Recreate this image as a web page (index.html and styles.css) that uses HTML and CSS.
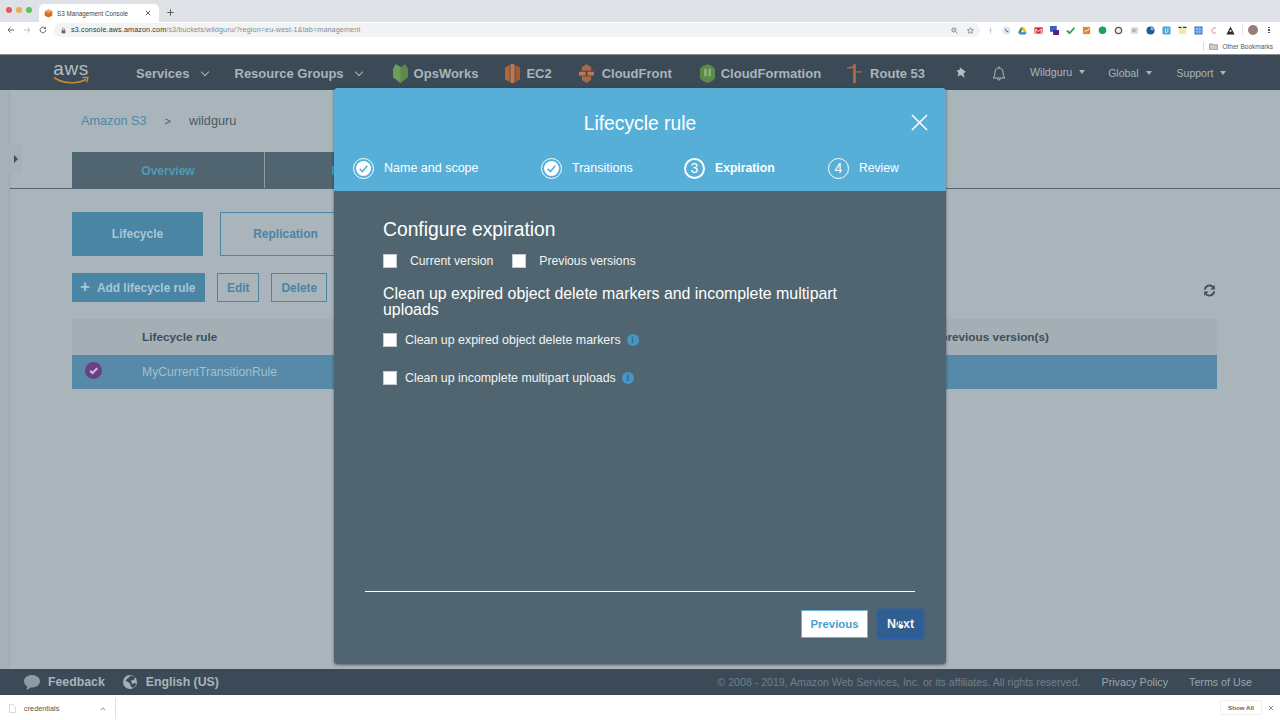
FILE: index.html
```html
<!DOCTYPE html>
<html lang="en">
<head>
<meta charset="utf-8">
<title>S3 Management Console</title>
<link rel="stylesheet" href="styles.css">
</head>
<body>
<div class="browser">
  <div class="tabstrip">
    <div class="lights"><span class="light red"></span><span class="light yellow"></span><span class="light green"></span></div>
    <div class="tab">
      <svg class="favicon" viewBox="0 0 10 10"><path d="M5 .5 9.2 2.6V7.4L5 9.5.8 7.4V2.6Z" fill="#dd6b20"/><path d="M5 .5 9.2 2.6 5 4.7.8 2.6Z" fill="#f0a05a"/></svg>
      <span class="tabtitle">S3 Management Console</span>
      <svg class="tabclose" viewBox="0 0 8 8"><path d="M1 1 7 7M7 1 1 7" stroke="#444" stroke-width="1.1"/></svg>
    </div>
    <svg class="newtab" viewBox="0 0 10 10"><path d="M5 .5V9.5M.5 5H9.5" stroke="#444" stroke-width="1.2"/></svg>
  </div>
  <div class="toolbar">
    <svg class="navicon" viewBox="0 0 10 10"><path d="M9 5H1.500M4.500 1.800 1.300 5l3.200 3.200" fill="none" stroke="#555" stroke-width="1.100"/></svg>
    <svg class="navicon" viewBox="0 0 10 10"><path d="M1 5H8.500M5.500 1.800 8.700 5 5.500 8.200" fill="none" stroke="#bbb" stroke-width="1.100"/></svg>
    <svg class="navicon" viewBox="0 0 10 10"><path d="M8.400 5A3.500 3.500 0 1 1 7.300 2.400" fill="none" stroke="#555" stroke-width="1.100"/><path d="M8.600 .8V3.600H5.800Z" fill="#555"/></svg>
    <div class="omnibox">
      <svg class="lock" viewBox="0 0 8 10"><path d="M1 4.500H7V9.500H1Z" fill="#666"/><path d="M2.300 4.500V3a1.700 1.700 0 0 1 3.400 0V4.500" fill="none" stroke="#666"/></svg>
      <span class="url"><span class="host">s3.console.aws.amazon.com</span>/s3/buckets/wildguru/?region=eu-west-1&amp;tab=management</span>
      <svg class="omni-icon" viewBox="0 0 10 10"><circle cx="4.200" cy="4.200" r="3" fill="none" stroke="#666"/><path d="M6.500 6.500 9.200 9.200M2.800 4.200H5.600" stroke="#666"/></svg>
      <svg class="omni-icon" viewBox="0 0 10 10"><path d="M5 .8 6.200 3.700 9.400 4 7 6 7.700 9.100 5 7.500 2.300 9.100 3 6 .6 4 3.800 3.700Z" fill="none" stroke="#555" stroke-width=".8"/></svg>
    </div>
    <div class="extensions">
      <svg class="ext" viewBox="0 0 10 10"><path d="M5 1.500V8.500M3.500 5H6.500" stroke="#c8cdd2" stroke-width="1.100"/></svg>
      <svg class="ext" viewBox="0 0 10 10"><circle cx="5" cy="5" r="4.500" fill="#dbe6f3"/><path d="M3.500 3C3.500 5.500 5 7 7.500 7L6.500 5.500 5 6 4.500 4.500 5 3.500Z" fill="#1f4e96"/></svg>
      <svg class="ext" viewBox="0 0 10 10"><path d="M3.500 1H6.500L9.800 7H6.500Z" fill="#f4c20d"/><path d="M3.500 1 .2 7 1.800 9.500 5 4Z" fill="#1c9a56"/><path d="M1.800 9.500H8.200L9.800 7H3.200Z" fill="#3b78e7"/></svg>
      <svg class="ext" viewBox="0 0 10 10"><path d="M.5 1.500H9.500V8.500H.5Z" fill="#c9303e"/><path d="M2 8.500V3.500L5 6 8 3.500V8.500" fill="none" stroke="#fff" stroke-width="1"/></svg>
      <svg class="ext" viewBox="0 0 10 10"><path d="M0 0H7.500V6.500H0Z" fill="#3a62c4"/><path d="M3.500 4.500H10V10H3.500Z" fill="#5a1f86"/></svg>
      <svg class="ext" viewBox="0 0 10 10"><path d="M1 5 4 8 9.300 2" fill="none" stroke="#3fa34d" stroke-width="2"/></svg>
      <svg class="ext" viewBox="0 0 10 10"><path d="M1 1H9V9H1Z" fill="#e5852e"/><path d="M2.500 7 5 4.500 6 5.500 8 2.500" fill="none" stroke="#fff" stroke-width="1"/></svg>
      <svg class="ext" viewBox="0 0 10 10"><circle cx="5" cy="4.800" r="4.200" fill="#1aa35c"/></svg>
      <svg class="ext" viewBox="0 0 10 10"><circle cx="5" cy="5" r="3.500" fill="#eee" stroke="#555" stroke-width="1.400"/></svg>
      <svg class="ext" viewBox="0 0 10 10"><rect x="1" y="1.500" width="8" height="7" rx="1.500" fill="#d8d8d8"/><rect x="3" y="3.500" width="3" height="3" fill="#aaa"/></svg>
      <svg class="ext" viewBox="0 0 10 10"><circle cx="5" cy="5" r="4.500" fill="#1e5e90"/><path d="M6 1 9 3 7 5 5 4Z" fill="#8cc4e8"/></svg>
      <svg class="ext" viewBox="0 0 10 10"><rect x=".5" y=".5" width="9" height="9" rx="1.500" fill="#4fa5dd"/><path d="M4 2.500V7.500L6.500 6.500V2.500" fill="none" stroke="#d4ebf8"/></svg>
      <svg class="ext" viewBox="0 0 10 10"><rect x="1" y="2" width="8" height="7" fill="#f3e6ae"/><path d="M.5 1.500H4M5.500 1.500H9.500" stroke="#333" stroke-width="1.200"/></svg>
      <svg class="ext" viewBox="0 0 10 10"><path d="M.5.5H9.500V9.500H.5Z" fill="#3a7fd0"/><path d="M3.500 1V9M6.500 1V9M1 3.500H9M1 6.500H9" stroke="#d6e6f7" stroke-width=".7"/></svg>
      <svg class="ext" viewBox="0 0 10 10"><path d="M7 2.500A3 3 0 1 0 7 7.500" fill="none" stroke="#eeb5b0" stroke-width="1.600"/></svg>
      <svg class="ext" viewBox="0 0 10 10"><path d="M5 .5 7 4.500 9.500 9.500H.5L3 4.500Z" fill="#2b2b2b"/><circle cx="5" cy="5.500" r="1.200" fill="#ddd"/></svg>
    </div>
    <span class="tb-sep"></span>
    <span class="avatar"></span>
    <span class="kebab"><i></i><i></i><i></i></span>
  </div>
  <div class="bookmarks">
    <span class="bm-sep"></span>
    <svg class="folder" viewBox="0 0 10 8"><path d="M.5 1H4L5 2H9.500V7.500H.5Z" fill="#ccc" stroke="#777" stroke-width=".7"/></svg>
    <span>Other Bookmarks</span>
  </div>
</div>

<header class="topnav">
  <div class="aws">
    <span class="awstext">aws</span>
    <svg class="smile" viewBox="0 0 36 9"><path d="M1 1.500C9 7.500 24 8.500 33 3.500" fill="none" stroke="#c28a3e" stroke-width="1.600"/><path d="M29.500 1.500 35 1.500 33.500 6.500" fill="none" stroke="#c28a3e" stroke-width="1.300"/></svg>
  </div>
  <a class="menu services">Services<span class="caret"></span></a>
  <a class="menu groups">Resource Groups<span class="caret"></span></a>
  <a class="svc opsworks"><svg viewBox="0 0 16 20"><path d="M8 3 13 0 16 5V14L8 20 0 14V5L3 0Z" fill="#5d8a4a"/><path d="M8 3V20L0 14V5L3 0Z" fill="#6d9c56"/></svg>OpsWorks</a>
  <a class="svc ec2"><svg viewBox="0 0 16 20"><path d="M5 1 0 3.500V16.500L5 19Z" fill="#b4653a"/><path d="M5.800 0H10.200V20H5.800Z" fill="#c0794e"/><path d="M11 1 16 3.500V16.500L11 19Z" fill="#a55a33"/></svg>EC2</a>
  <a class="svc cloudfront"><svg viewBox="0 0 16 20"><path d="M3 3 8 0 13 3V7H3Z" fill="#a96a45"/><path d="M0 8H7V12H0ZM9 8H16V12H9Z" fill="#c0794e"/><path d="M3 13H13V17L8 20 3 17Z" fill="#a96a45"/></svg>CloudFront</a>
  <a class="svc cloudformation"><svg viewBox="0 0 16 20"><path d="M3 2 8 0 13 2 16 5V15L13 18 8 20 3 18 0 15V5Z" fill="#5d8a4a"/><path d="M4.500 5H7V13H4.500ZM9 5H11.500V13H9Z" fill="#8fb77b"/></svg>CloudFormation</a>
  <a class="svc route53"><svg viewBox="0 0 16 20"><path d="M0 3.500 6.500 2V0H9.500V7.500H16V9H9.500V20H6.500V4.500L0 5Z" fill="#a96a45"/></svg>Route 53</a>
  <svg class="pin" viewBox="0 0 12 12"><path d="M5 .5 11 5 8.500 6 9.500 11 6 8 2.500 9.500 3.500 6 1.500 3.500 4.500 3Z" fill="#b3bec4"/></svg>
  <svg class="bell" viewBox="0 0 14 15"><path d="M1 12C3 10.500 2.500 8.500 3 6 3.500 3 5 2 7 2S10.500 3 11 6C11.500 8.500 11 10.500 13 12Z" fill="none" stroke="#b3bec4" stroke-width="1"/><path d="M5.500 13a1.600 1.600 0 0 0 3 0M7 .5V2" fill="none" stroke="#b3bec4"/></svg>
  <a class="user wildguru">Wildguru<span class="caret small"></span></a>
  <a class="user global">Global<span class="caret small"></span></a>
  <a class="user support">Support<span class="caret small"></span></a>
</header>

<main class="content">
  <div class="drawer"><span class="drawer-arrow"></span></div>
  <div class="page">
    <nav class="crumbs"><a class="crumb-link">Amazon S3</a><span class="crumb-sep">&gt;</span><span>wildguru</span></nav>
    <div class="tabs">
      <a class="ptab">Overview</a><a class="ptab second">Properties</a>
    </div>
    <div class="inner">
      <div class="subtabs">
        <a class="subtab on">Lifecycle</a>
        <a class="subtab">Replication</a>
      </div>
      <div class="actions">
        <a class="btn primary"><span class="plus">+</span>Add lifecycle rule</a>
        <a class="btn edit">Edit</a>
        <a class="btn delete">Delete</a>
        <svg class="refresh" viewBox="0 0 14 14"><path d="M2 6A5 5 0 0 1 11 3.500M12 8A5 5 0 0 1 3 10.500" fill="none" stroke="#3e4d58" stroke-width="1.900"/><path d="M12.700 1V6H8ZM1.300 13V8H6Z" fill="#3e4d58"/></svg>
      </div>
      <div class="thead"><span>Lifecycle rule</span><span class="prev">Expire previous version(s)</span></div>
      <div class="trow">
        <span class="rowcheck"><svg viewBox="0 0 10 10"><path d="M3 5.200 4.400 6.500 7.200 3.700" fill="none" stroke="#c9bcd6" stroke-width="1.300"/></svg></span>
        <span>MyCurrentTransitionRule</span>
      </div>
    </div>
  </div>
</main>

<footer class="foot">
  <svg class="foot-icon" viewBox="0 0 16 15"><path d="M8 0C12.500 0 16 2.700 16 6.200S12.500 12.400 8 12.400H6.500C5.500 13.600 3.500 14.600 2 14.600 3 13.500 3.400 12.500 3.300 11.300 1.300 10.200 0 8.400 0 6.200 0 2.700 3.500 0 8 0Z" fill="#8d9ba3"/></svg>
  <a class="foot-strong feedback">Feedback</a>
  <svg class="foot-icon globe" viewBox="0 0 14 14"><circle cx="7" cy="7" r="7" fill="#a5b1b7"/><path d="M8 .5 12 2 11 5 8 5.500 9 9 12.500 8 13 10 10 13 8 11.500 6.500 8 2.500 5.500 5 3Z" fill="#3b4a56"/></svg>
  <a class="foot-strong">English (US)</a>
  <span class="copy">© 2008 - 2019, Amazon Web Services, Inc. or its affiliates. All rights reserved.</span>
  <a class="foot-link privacy">Privacy Policy</a>
  <a class="foot-link">Terms of Use</a>
</footer>

<div class="downloads">
  <svg class="dl-file" viewBox="0 0 8 10"><path d="M.5.5H5L7.500 3V9.500H.5Z" fill="none" stroke="#ccc" stroke-width=".8"/></svg>
  <span class="dl-name">credentials</span>
  <svg class="dl-chev" viewBox="0 0 8 5"><path d="M1 4 4 1 7 4" fill="none" stroke="#666"/></svg>
  <span class="dl-sep"></span>
  <span class="dl-all">Show All</span>
  <svg class="dl-x" viewBox="0 0 8 8"><path d="M1 1 7 7M7 1 1 7" stroke="#666"/></svg>
</div>

<section class="modal">
  <div class="modal-head">
    <div class="modal-title"><h2>Lifecycle rule</h2>
      <svg class="modal-close" viewBox="0 0 18 18"><path d="M1 1 17 17M17 1 1 17" stroke="#fff" stroke-width="1.600"/></svg>
    </div>
    <ol class="steps">
      <li class="step s1"><span class="circle done"><svg viewBox="0 0 14 14"><path d="M3.500 7.300 6 9.800 10.500 4.500" fill="none" stroke="#57afd8" stroke-width="1.500"/></svg></span>Name and scope</li>
      <li class="step s2"><span class="circle done"><svg viewBox="0 0 14 14"><path d="M3.500 7.300 6 9.800 10.500 4.500" fill="none" stroke="#57afd8" stroke-width="1.500"/></svg></span>Transitions</li>
      <li class="step s3 current"><span class="circle">3</span>Expiration</li>
      <li class="step s4"><span class="circle">4</span>Review</li>
    </ol>
  </div>
  <div class="modal-body">
    <h3 class="config">Configure expiration</h3>
    <div class="versions">
      <label class="check"><span class="box"></span>Current version</label>
      <label class="check"><span class="box"></span>Previous versions</label>
    </div>
    <h4 class="cleanup">Clean up expired object delete markers and incomplete multipart uploads</h4>
    <label class="check row"><span class="box"></span>Clean up expired object delete markers<span class="info">i</span></label>
    <label class="check row"><span class="box"></span>Clean up incomplete multipart uploads<span class="info">i</span></label>
  </div>
  <div class="modal-foot">
    <a class="mbtn prevbtn">Previous</a>
    <a class="mbtn nextbtn">Next
      <svg class="cursor" viewBox="0 0 10 12"><path d="M3 1.500C3 .5 4.500 .5 4.500 1.500V5L8 6C9 6.400 9 7.500 8.500 9L7.500 11H4L1.500 7.500C1 6.500 2 6 3 7Z" fill="#fff" stroke="#222" stroke-width=".8"/></svg>
    </a>
  </div>
</section>
</body>
</html>
```
FILE: styles.css
```css
* { box-sizing: border-box; }
html, body { margin: 0; padding: 0; }
body {
  position: relative;
  width: 1280px;
  height: 720px;
  overflow: hidden;
  display: flex;
  flex-direction: column;
  font-family: "Liberation Sans", Arial, sans-serif;
  background: #a9b5bb;
}
a { display: block; }
h2, h3, h4, ol { margin: 0; padding: 0; font-weight: 400; }
ol { list-style: none; }

/* browser chrome */
.browser { height: 55px; background: #fff; flex: none; border-bottom: 1px solid #8a8f94; }
.tabstrip { height: 22px; background: #dee1e6; display: flex; align-items: flex-end; padding-left: 6px; }
.lights { display: flex; gap: 4px; align-self: flex-start; padding-top: 7px; width: 33px; }
.light { width: 6px; height: 6px; border-radius: 50%; }
.red { background: #e4575a; }
.yellow { background: #e2b24a; }
.green { background: #5cc45f; }
.tab { width: 120px; height: 18px; background: #fff; border-radius: 5px 5px 0 0; display: flex; align-items: center; padding: 0 5px; }
.favicon { width: 9px; height: 9px; margin-right: 4px; }
.tabtitle { font-size: 6.300px; color: #444; flex: 1; white-space: nowrap; }
.tabclose { width: 6px; height: 6px; margin-right: 3px; }
.newtab { width: 7px; height: 7px; margin: 0 0 6px 8px; }
.toolbar { height: 16px; display: flex; align-items: center; padding-left: 7px; background: #fff; }
.navicon { width: 8px; height: 8px; margin-right: 8px; flex: none; }
.navicon:nth-child(3) { margin-right: 7px; }
.omnibox { width: 926px; height: 14px; background: #f1f3f4; border-radius: 7px; display: flex; align-items: center; padding: 0 6px 0 8px; flex: none; }
.lock { width: 5px; height: 7px; margin-right: 5px; margin-left: -1px; }
.url { font-size: 7.150px; color: #8a8a8a; flex: 1; white-space: nowrap; letter-spacing: .02em; }
.host { color: #333; }
.omni-icon { width: 7px; height: 7px; margin-left: 9px; }
.extensions { display: flex; gap: 7px; margin-left: 6px; align-items: center; flex: none; }
.ext { width: 9px; height: 9px; display: block; flex: none; }
.tb-sep { width: 1px; height: 10px; background: #e3e3e3; margin-left: 7px; flex: none; }
.avatar { width: 10px; height: 10px; border-radius: 50%; background: #9a7c78; margin-left: 5px; flex: none; }
.kebab { display: flex; flex-direction: column; gap: 1px; margin-left: 10px; }
.kebab i { width: 1.500px; height: 1.500px; background: #555; display: block; }
.bookmarks { height: 16px; display: flex; align-items: center; justify-content: flex-end; padding-right: 7px; font-size: 6.500px; color: #555; }
.bm-sep { width: 1px; height: 9px; background: #ddd; margin-right: 5px; }
.folder { width: 9px; height: 7px; margin-right: 4px; }

/* top navigation */
.topnav { height: 35px; background: #3b4a56; flex: none; display: flex; align-items: center; padding-top: 1px; color: #a9b5bb; font-size: 13px; font-weight: 700; white-space: nowrap; }
.aws { width: 36px; margin-left: 53px; height: 26px; text-align: center; }
.awstext { font-size: 19px; font-weight: 400; color: #b3bec4; line-height: 17px; display: block; letter-spacing: .5px; }
.smile { width: 36px; height: 9px; display: block; margin-top: -1px; }
.menu { display: flex; align-items: center; }
.services { margin-left: 47px; }
.groups { margin-left: 26px; }
.caret { width: 6px; height: 6px; border-right: 1.500px solid #a9b5bb; border-bottom: 1.500px solid #a9b5bb; transform: rotate(45deg); margin: -3px 1px 0 12px; }
.caret.small { width: 0; height: 0; border-left: 3.500px solid transparent; border-right: 3.500px solid transparent; border-top: 4px solid #a9b5bb; border-bottom: 0; transform: none; margin: 0 0 0 7px; }
.svc { display: flex; align-items: center; }
.svc svg { width: 15px; height: 19px; margin-right: 6px; }
.opsworks { margin-left: 30px; }
.ec2 { margin-left: 27px; }
.cloudfront { margin-left: 27px; }
.cloudfront svg { margin-right: 8px; }
.cloudformation { margin-left: 28px; }
.route53 { margin-left: 26px; }
.route53 svg { margin-right: 8px; }
.pin { width: 12px; height: 12px; margin-left: 30px; }
.bell { width: 14px; height: 15px; margin-left: 25px; }
.user { display: flex; align-items: center; font-size: 10.500px; font-weight: 400; }
.wildguru { margin-left: 24px; padding-bottom: 3px; font-size: 10.700px; }
.global { margin-left: 23px; }
.support { margin-left: 25px; }

/* page behind the overlay */
.content { flex: 1; display: flex; background: #a9b5bb; position: relative; min-height: 0; }
.drawer { width: 10px; border-right: 1px solid #9aa7ae; flex: none; background: #a5b1b7; position: relative; }
.drawer-arrow { position: absolute; left: 9px; top: 53px; width: 13px; height: 31px; background: #a5b1b7; border-radius: 0 3px 3px 0; display: flex; align-items: center; justify-content: center; }
.drawer-arrow::before { content: ""; border-top: 4px solid transparent; border-bottom: 4px solid transparent; border-left: 4px solid #3e4d58; }
.page { flex: 1; min-width: 0; }
.crumbs { display: flex; gap: 18px; padding: 24px 0 0 81px; height: 62px; margin-left: -10px; font-size: 12.700px; color: #4a5a65; align-items: flex-start; }
.crumb-link { color: #4f87a6; }
.crumb-sep { font-size: 11px; line-height: 15px; }
.tabs { display: flex; height: 37px; margin-left: -1px; padding-left: 63px; border-bottom: 1px solid #50656f; font-size: 12px; font-weight: 700; }
.ptab { width: 193px; height: 36px; background: #50656f; border-right: 1px solid #8e9ea6; color: #4f9ab5; text-align: center; line-height: 38px; }
.inner { padding: 23px 63px 0 62px; }
.subtabs { display: flex; gap: 17px; }
.subtab { width: 131px; height: 44px; border: 1px solid #4a85a6; color: #4a85a6; font-size: 12px; font-weight: 700; text-align: center; line-height: 43px; }
.subtab.on { background: #4a85a6; color: #a9c6d5; }
.actions { display: flex; gap: 12px; margin-top: 17px; align-items: flex-start; position: relative; height: 46px; }
.btn { height: 29px; border: 1px solid #4a85a6; color: #4a85a6; font-size: 11.900px; font-weight: 700; line-height: 28px; padding: 0 9px; }
.btn.primary { width: 133px; background: #4a85a6; color: #a9c6d5; white-space: nowrap; padding: 0 7px; }
.plus { font-size: 17px; font-weight: 700; line-height: 24px; margin-right: 7px; }
.refresh { width: 13px; height: 13px; position: absolute; right: 1px; top: 11px; }
.thead { height: 36px; background: #a3afb5; display: flex; justify-content: space-between; align-items: center; padding: 0 168px 1px 70px; font-size: 11.800px; font-weight: 700; color: #3e4d58; }
.trow { height: 34px; background: #568aa8; display: flex; align-items: center; font-size: 12.200px; color: #a3c0d0; position: relative; padding-left: 70px; }
.rowcheck { width: 17px; height: 17px; border-radius: 50%; background: #6a3f85; position: absolute; left: 13px; top: 7px; display: flex; }
.rowcheck svg { width: 17px; height: 17px; }

/* footer */
.foot { height: 26px; background: #3b4a56; flex: none; display: flex; align-items: center; padding-left: 24px; font-size: 10.700px; color: #a9b5bb; white-space: nowrap; }
.foot-icon { width: 16px; height: 15px; margin-right: 8px; flex: none; }
.globe { width: 14px; height: 14px; margin-left: 18px; margin-right: 9px; }
.foot-strong { font-size: 12.300px; font-weight: 700; }
.copy { font-size: 10.600px; color: #6f808b; margin-left: auto; }
.foot-link { color: #9aa7ae; margin-right: 28px; }
.privacy { margin-left: 21px; margin-right: 21px; }
.downloads { height: 25px; background: #fff; flex: none; display: flex; align-items: center; padding: 2px 0 0 9px; font-size: 7.300px; color: #555; }
.dl-file { width: 7px; height: 9px; margin-right: 8px; }
.dl-name { width: 76px; }
.dl-chev { width: 6px; height: 4px; margin-right: 9px; }
.dl-sep { width: 1px; height: 21px; background: #e0e0e0; }
.dl-all { margin-left: auto; margin-right: 6px; font-size: 6.200px; font-weight: 700; color: #666; padding: 3px 7px; border: 1px solid #eee; border-radius: 2px; margin-top: -3px; }
.dl-x { width: 6px; height: 6px; margin-right: 6px; margin-top: -2px; }

/* modal */
.modal { position: absolute; left: 334px; top: 88px; width: 612px; height: 576px; display: flex; flex-direction: column; background: #50656f; border-radius: 4px; box-shadow: 0 1px 3px rgba(30,40,50,.6); color: #fff; }
.modal-head { height: 103px; background: #57afd8; border-radius: 4px 4px 0 0; flex: none; }
.modal-title { position: relative; padding-top: 25px; height: 69px; text-align: center; }
.modal-title h2 { font-size: 19.300px; line-height: 22px; }
.modal-close { position: absolute; right: 18px; top: 26px; width: 17px; height: 17px; }
.steps { display: flex; padding-left: 19px; font-size: 12.500px; height: 34px; }
.step { display: flex; align-items: center; height: 22px; color: #fff; white-space: nowrap; }
.s1 { width: 188px; }
.s2 { width: 143px; }
.s3 { width: 144px; font-weight: 700; font-size: 12.200px; }
.s4 { font-size: 12.100px; }
.circle { width: 21px; height: 21px; border-radius: 50%; border: 1px solid #fff; display: flex; align-items: center; justify-content: center; font-size: 14px; font-weight: 400; margin-right: 10px; flex: none; }
.done { background: #fff; background-clip: content-box; padding: 2px; }
.done svg { width: 15px; height: 15px; }
.current .circle { border-width: 2px; }
.modal-body { flex: 1; padding: 28px 0 0 49px; min-height: 0; }
.config { font-size: 19.300px; line-height: 22px; }
.versions { display: flex; gap: 19px; margin-top: 10px; height: 20px; align-items: center; }
.check { display: flex; align-items: center; font-size: 12.200px; color: #f1f4f5; }
.box { width: 14px; height: 14px; background: #fff; border: 1px solid #c5ccd0; margin-right: 13px; flex: none; }
.cleanup { font-size: 15.900px; line-height: 16px; width: 500px; margin-top: 15px; }
.row { height: 20px; font-size: 12.400px; }
.cleanup + .row { margin-top: 12px; }
.row + .row { margin-top: 18px; }
.row .box { margin-right: 8px; }
.info { width: 12px; height: 12px; border-radius: 50%; background: #3f98c9; color: #50656f; font-size: 10px; font-weight: 700; text-align: center; line-height: 12px; margin-left: 6px; font-family: "Liberation Serif", serif; }
.modal-foot { height: 73px; margin: 0 31px; border-top: 1px solid #fff; display: flex; justify-content: flex-end; gap: 10px; padding: 18px 0 0; flex: none; }
.mbtn { height: 28px; font-size: 12.500px; font-weight: 700; line-height: 26px; text-align: center; }
.prevbtn { width: 67px; background: #fff; color: #4a9ecb; border: 1px solid #6db5d8; font-size: 11.400px; }
.nextbtn { width: 45px; margin-right: -8px; background: #2f5f92; box-shadow: 0 0 0 1.500px #2b5fa8; color: #f1f4f5; position: relative; line-height: 28px; border-radius: 2px; }
.cursor { position: absolute; left: 18px; top: 9px; width: 9px; height: 11px; }
```
